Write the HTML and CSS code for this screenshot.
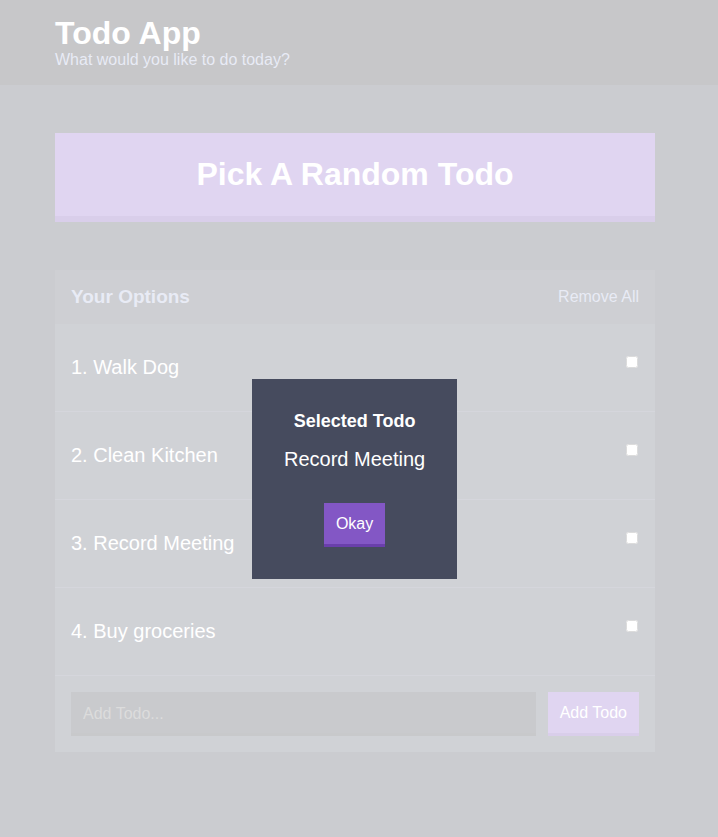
FILE: index.html
```html
<!DOCTYPE html>
<html lang="en">
<head>
<meta charset="utf-8">
<title>Todo App</title>
<link rel="stylesheet" href="styles.css">
</head>
<body>
  <header class="header">
    <div class="container">
      <h1 class="header__title">Todo App</h1>
      <h2 class="header__subtitle">What would you like to do today?</h2>
    </div>
  </header>
  <main class="container">
    <button class="big-button">Pick A Random Todo</button>
    <section class="widget">
      <div class="widget-header">
        <h3 class="widget-header__title">Your Options</h3>
        <button class="button--link">Remove All</button>
      </div>
      <div class="option">
        <p class="option__text">1. Walk Dog</p>
        <input class="option__check" type="checkbox">
      </div>
      <div class="option">
        <p class="option__text">2. Clean Kitchen</p>
        <input class="option__check" type="checkbox">
      </div>
      <div class="option">
        <p class="option__text">3. Record Meeting</p>
        <input class="option__check" type="checkbox">
      </div>
      <div class="option">
        <p class="option__text">4. Buy groceries</p>
        <input class="option__check" type="checkbox">
      </div>
      <form class="add-option">
        <input class="add-option__input" type="text" placeholder="Add Todo...">
        <button class="button" type="button">Add Todo</button>
      </form>
    </section>
  </main>
  <div class="overlay">
    <div class="modal">
      <h3 class="modal__title">Selected Todo</h3>
      <p class="modal__body">Record Meeting</p>
      <button class="button">Okay</button>
    </div>
  </div>
</body>
</html>
```
FILE: styles.css
```css
* { box-sizing: border-box; }
html, body { margin: 0; padding: 0; }
body {
  background: #333745;
  font-family: "Liberation Sans", Arial, sans-serif;
  color: #fff;
  min-height: 837px;
}
.container {
  max-width: 632px;
  margin-left: max(0px, calc((100% - 640px) / 2));
  margin-right: auto;
  padding: 0 16px;
}
.header {
  background: #20222b;
  padding: 16px 0;
  height: 85px;
}
.header__title {
  margin: 0;
  font-size: 32px;
  line-height: 34px;
  font-weight: bold;
  color: #fff;
}
.header__subtitle {
  margin: 0;
  font-size: 16px;
  line-height: 19px;
  font-weight: normal;
  color: #a5afd7;
}
main.container { padding-top: 48px; }
.big-button {
  display: block;
  width: 100%;
  background: #8357c5;
  border: none;
  border-bottom: 6px solid #6a3fab;
  color: #fff;
  font-family: inherit;
  font-weight: bold;
  font-size: 32px;
  line-height: 37px;
  padding: 23px 0;
  margin: 0 0 48px;
}
.widget {
  background: #464b5e;
}
.widget-header {
  background: #3c4251;
  display: flex;
  justify-content: space-between;
  align-items: center;
  padding: 16px;
}
.widget-header__title {
  margin: 0;
  font-size: 19px;
  line-height: 22px;
  color: #a5afd7;
}
.button--link {
  background: none;
  border: none;
  padding: 0;
  font-family: inherit;
  font-size: 16px;
  color: #a5afd7;
}
.option {
  display: flex;
  justify-content: space-between;
  align-items: center;
  padding: 16px;
  border-bottom: 1px solid #575d74;
}
.option__text {
  margin: 16px 0;
  font-size: 20px;
  line-height: 23px;
  color: #fff;
}
.option__check {
  margin: 0 1px 11px 0;
  width: 12px;
  height: 12px;
}
.add-option {
  display: flex;
  padding: 16px;
  gap: 12px;
}
.add-option__input {
  flex-grow: 1;
  background: #2b2e3a;
  border: none;
  border-bottom: 3px solid #262833;
  color: #a5afd7;
  font-family: inherit;
  font-size: 16px;
  padding: 12px 12px 9px;
  height: 44px;
}
.add-option__input::placeholder { color: #757575; }
.button {
  background: #8357c5;
  border: none;
  border-bottom: 3px solid #6a3fab;
  color: #fff;
  font-family: inherit;
  font-size: 16px;
  line-height: 18px;
  padding: 12px 12px 11px;
  height: 44px;
}
.overlay {
  position: fixed;
  inset: 0;
  background: rgba(255, 255, 255, 0.75);
}
.modal {
  position: absolute;
  left: 252px;
  top: 379px;
  background: #464b5e;
  color: #fff;
  padding: 32px;
  text-align: center;
}
.modal__title {
  margin: 0 0 16px;
  font-size: 18px;
  line-height: 21px;
  font-weight: bold;
}
.modal__body {
  margin: 0 0 32px;
  font-size: 20px;
  line-height: 23px;
  white-space: nowrap;
}
.modal .button { padding: 12px 12px 11px; }
```
